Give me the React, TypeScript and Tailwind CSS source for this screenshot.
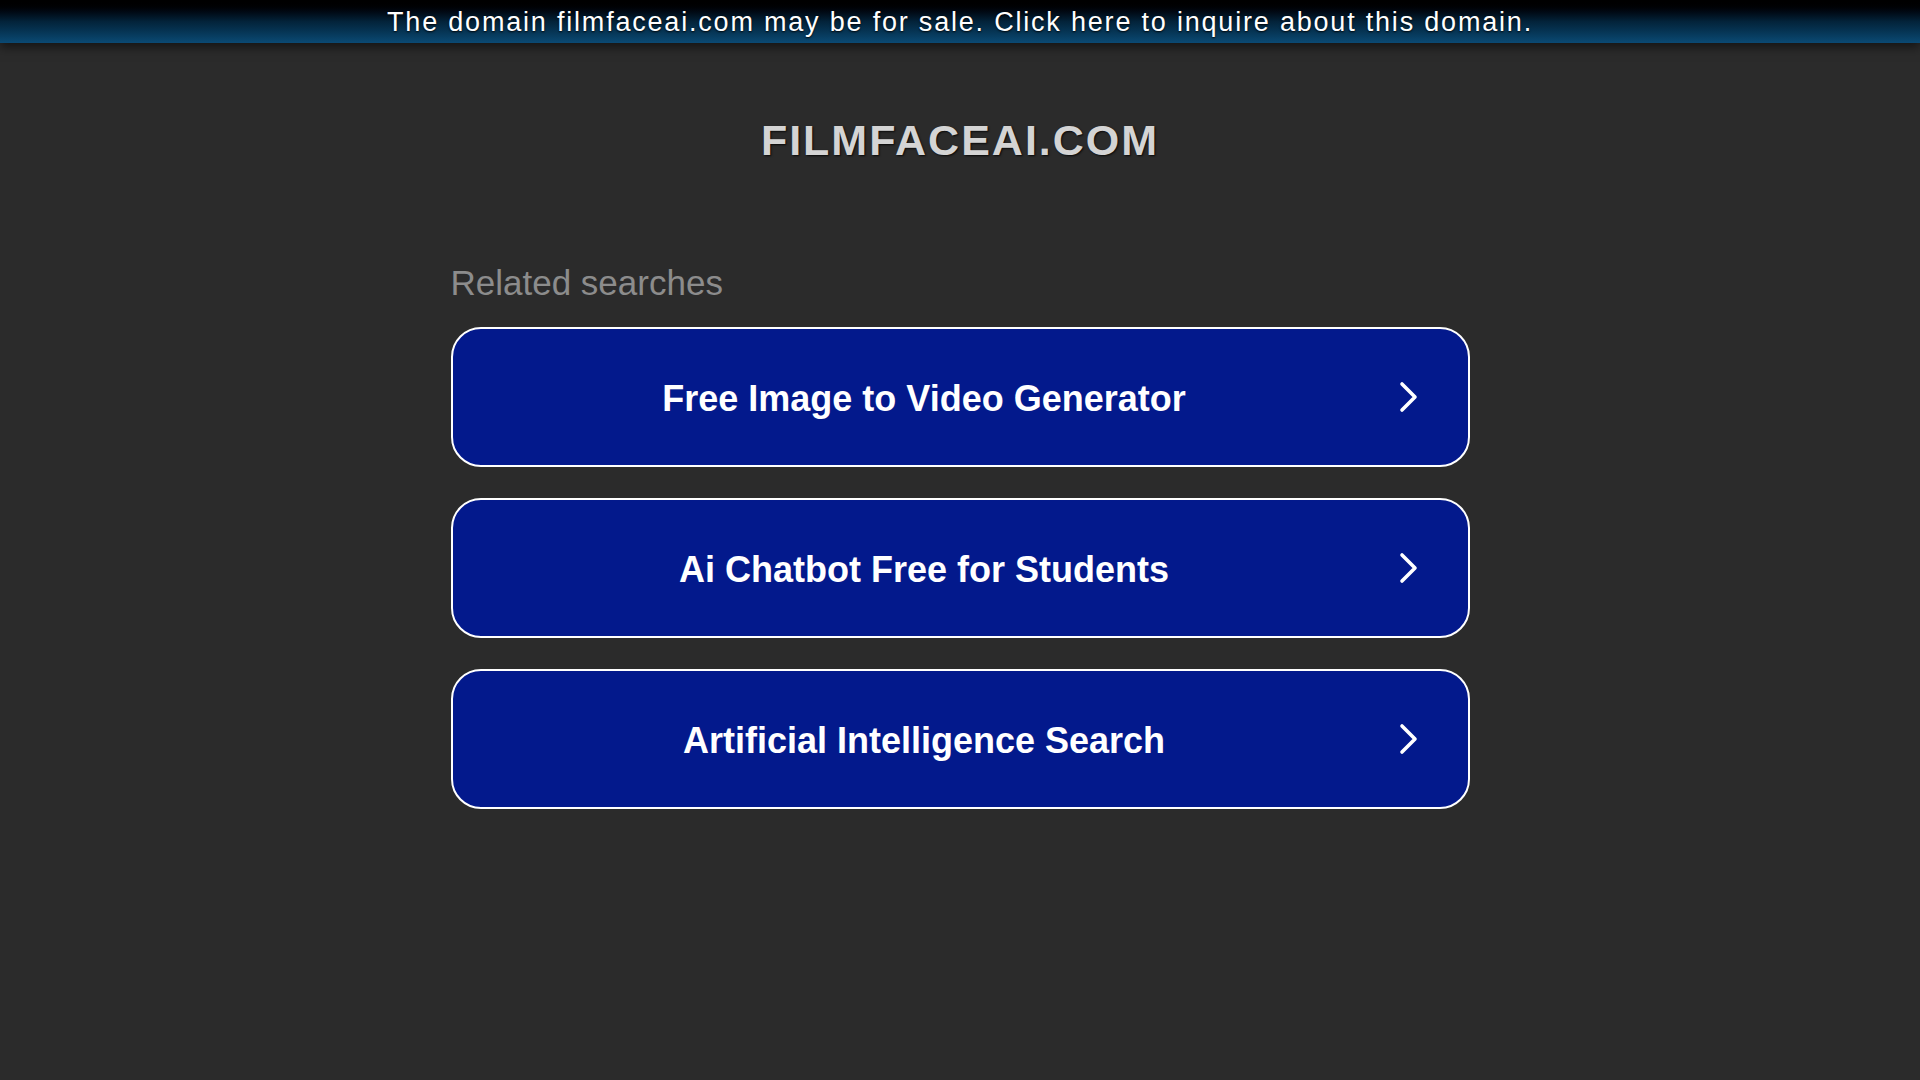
import React from "react";

const searches = [
    "Free Image to Video Generator",
    "Ai Chatbot Free for Students",
    "Artificial Intelligence Search",
];

function Chevron() {
    return (
        <svg width="22" height="32" viewBox="0 0 22 32" fill="none">
            <polyline
                points="4,3 17,16 4,29"
                stroke="white"
                strokeWidth="3.6"
                strokeLinecap="round"
                strokeLinejoin="round"
            />
        </svg>
    );
}

function SearchLink({ label }: { label: string }) {
    return (
        <a
            href="#"
            className="relative flex h-[140px] items-center justify-center rounded-[30px] border-2 border-white bg-[#03198c] pt-[4px] pr-[72px] text-[36px] font-bold text-white"
        >
            <span>{label}</span>
            <span className="absolute right-[48px] top-1/2 -translate-y-1/2">
                <Chevron />
            </span>
        </a>
    );
}

function App() {
    return (
        <div className="min-h-screen bg-[#2b2b2b] font-['Liberation_Sans',Arial,sans-serif]">
            <div className="flex h-[43px] items-center justify-center bg-gradient-to-b from-[#000000] via-[#03233a] to-[#0b4a74] pt-[2px] shadow-[0_4px_10px_rgba(0,0,0,0.55)]">
                <a
                    href="#"
                    className="text-[27px] leading-none tracking-[1.8px] text-white [text-shadow:0_1px_2px_rgba(0,0,0,0.9)]"
                >
                    The domain filmfaceai.com may be for sale. Click here to inquire about this domain.
                </a>
            </div>
            <h1 className="mt-[72px] text-center text-[43px] leading-[50px] font-bold tracking-[2px] text-[#d4d4d4] [text-shadow:1px_1px_2px_rgba(0,0,0,0.8)]">
                FILMFACEAI.COM
            </h1>
            <div className="mx-auto mt-[98px] w-[1019px]">
                <p className="text-[35px] leading-[40px] text-[#8c8c8c]">Related searches</p>
                <div className="mt-[24px] flex flex-col gap-[31px]">
                    {searches.map((s) => (
                        <SearchLink key={s} label={s} />
                    ))}
                </div>
            </div>
        </div>
    );
}

export default App;
